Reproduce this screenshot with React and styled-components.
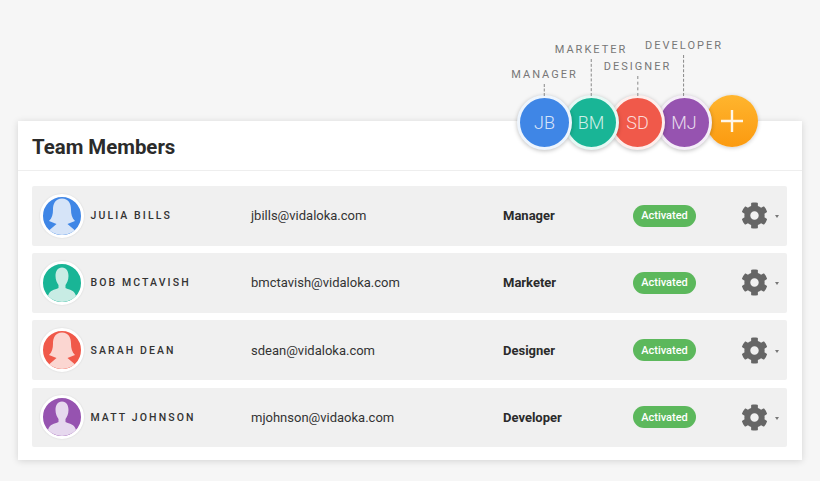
import styled, { createGlobalStyle } from "styled-components";
import { FaCog } from "react-icons/fa";

const Global = createGlobalStyle`
  html, body {
    margin: 0;
    background: #f6f6f6;
    font-family: Roboto, "Liberation Sans", sans-serif;
  }
`;

const Page = styled.div`
  width: 820px;
  height: 481px;
  padding: 121px 18px 0;
  box-sizing: border-box;
  overflow: hidden;
`;

const Card = styled.section`
  position: relative;
  width: 784px;
  height: 339px;
  background: #fff;
  box-shadow: 0 1px 7px rgba(0, 0, 0, 0.14);
`;

const Header = styled.header`
  height: 50px;
  box-sizing: border-box;
  padding: 2px 0 0 14px;
  display: flex;
  align-items: center;
  border-bottom: 1px solid #eeeeee;
`;

const Title = styled.h1`
  margin: 0;
  font-size: 20.4px;
  font-weight: 700;
  color: #2b2b2b;
`;

const Team = styled.div`
  position: absolute;
  left: 499px;
  top: -26.5px;
  display: flex;
`;

const Bubble = styled.div`
  position: relative;
  z-index: ${(p) => p.$z};
  width: 55px;
  height: 55px;
  margin-right: -8.5px;
  box-sizing: border-box;
  border: 3px solid ${(p) => p.$ring};
  border-radius: 50%;
  background: ${(p) => p.$color};
  color: rgba(255, 255, 255, 0.8);
  font-size: 18px;
  font-weight: 300;
  display: flex;
  align-items: center;
  justify-content: center;
  box-shadow: 0 1px 4px rgba(0, 0, 0, 0.25);
`;

const AddButton = styled.div`
  width: 52px;
  height: 52px;
  margin-left: 3px;
  border-radius: 50%;
  background: linear-gradient(#ffb52e, #fb9a10);
  display: flex;
  align-items: center;
  justify-content: center;
  box-shadow: 0 1px 4px rgba(0, 0, 0, 0.2);
`;

const Tag = styled.div`
  position: absolute;
  left: 50%;
  bottom: 100%;
  margin-bottom: 2px;
  transform: translateX(-50%);
  display: flex;
  flex-direction: column;
  align-items: center;
  gap: 3px;
`;

const TagText = styled.span`
  font-size: 11px;
  font-weight: 400;
  letter-spacing: 2px;
  line-height: 13px;
  color: #777;
`;

const TagLine = styled.i`
  display: block;
  height: ${(p) => p.$h}px;
  border-left: 1px dashed #888;
`;

const Rows = styled.div`
  padding: 15px 15px 0 14px;
  display: flex;
  flex-direction: column;
  gap: 7.7px;
`;

const Row = styled.div`
  height: 59.5px;
  padding-left: 8px;
  background: #f0f0f0;
  border-radius: 2px;
  display: grid;
  grid-template-columns: 211px 252px 130px 108px 1fr;
  align-items: center;
`;

const Person = styled.div`
  display: flex;
  align-items: center;
  gap: 6.5px;
`;

const Avatar = styled.div`
  width: 44px;
  height: 44px;
  box-sizing: border-box;
  border: 3px solid #fff;
  border-radius: 50%;
  overflow: hidden;
  background: ${(p) => p.$color};
  box-shadow: 0 0 2px rgba(0, 0, 0, 0.12);
  svg {
    display: block;
  }
`;

const Name = styled.span`
  font-size: 10.5px;
  font-weight: 500;
  letter-spacing: 2.1px;
  color: #333;
`;

const Email = styled.span`
  font-size: 13px;
  color: #333;
`;

const Role = styled.span`
  font-size: 13px;
  font-weight: 700;
  color: #2b2b2b;
`;

const Badge = styled.span`
  width: 63px;
  height: 22px;
  border-radius: 11px;
  background: #5cb85c;
  color: #fff;
  font-size: 11px;
  font-weight: 500;
  display: flex;
  align-items: center;
  justify-content: center;
`;

const Actions = styled.div`
  display: flex;
  align-items: center;
  gap: 7px;
  color: #666;
`;

const Caret = styled.i`
  width: 0;
  height: 0;
  margin-top: 2px;
  border-left: 2.5px solid transparent;
  border-right: 2.5px solid transparent;
  border-top: 3px solid #777;
`;

const PEOPLE = [
  { name: "JULIA BILLS", email: "jbills@vidaloka.com", role: "Manager", initials: "JB", color: "#3f86e6", tint: "#d6e4f8", ring: "#eef5fd", female: true, line: 12 },
  { name: "BOB MCTAVISH", email: "bmctavish@vidaloka.com", role: "Marketer", initials: "BM", color: "#19b596", tint: "#c8ece4", ring: "#e6f8f4", female: false, line: 37 },
  { name: "SARAH DEAN", email: "sdean@vidaloka.com", role: "Designer", initials: "SD", color: "#f0594a", tint: "#fbd6d1", ring: "#fdeeec", female: true, line: 20 },
  { name: "MATT JOHNSON", email: "mjohnson@vidaoka.com", role: "Developer", initials: "MJ", color: "#9653b0", tint: "#e6d8ee", ring: "#f5eef8", female: false, line: 41 },
];

const FEMALE = "M19 1.5C12.5 1.5 10 6.5 10 12.5C10 17.5 9 21 6 24L13.5 27L6.5 33V39H31.5V33L24.5 27L32 24C29 21 28 17.5 28 12.5C28 6.5 25.5 1.5 19 1.5Z";
const MALE = "M19 3.5C14.5 3.5 12.5 7.5 12.5 12C12.5 16 14 19 15.5 21V24C11.5 26 6.5 26 5 32V39H33V32C31.5 26 26.5 26 22.5 24V21C24 19 25.5 16 25.5 12C25.5 7.5 23.5 3.5 19 3.5Z";

const Silhouette = ({ female, tint }) => (
  <svg width="38" height="38" viewBox="0 0 38 38">
    <path d={female ? FEMALE : MALE} fill={tint} />
  </svg>
);

export default function App() {
  return (
    <Page>
      <Global />
      <Card>
        <Header>
          <Title>Team Members</Title>
        </Header>
        <Team>
          {PEOPLE.map((p, i) => (
            <Bubble key={p.initials} $color={p.color} $ring={p.ring} $z={8 - i}>
              {p.initials}
              <Tag>
                <TagText>{p.role.toUpperCase()}</TagText>
                <TagLine $h={p.line} />
              </Tag>
            </Bubble>
          ))}
          <AddButton>
            <svg width="26" height="26" viewBox="0 0 26 26">
              <path d="M13 2V24M2 13H24" stroke="#fff" strokeWidth="2.4" opacity="0.9" />
            </svg>
          </AddButton>
        </Team>
        <Rows>
          {PEOPLE.map((p) => (
            <Row key={p.email}>
              <Person>
                <Avatar $color={p.color}>
                  <Silhouette female={p.female} tint={p.tint} />
                </Avatar>
                <Name>{p.name}</Name>
              </Person>
              <Email>{p.email}</Email>
              <Role>{p.role}</Role>
              <Badge>Activated</Badge>
              <Actions>
                <FaCog size={27} />
                <Caret />
              </Actions>
            </Row>
          ))}
        </Rows>
      </Card>
    </Page>
  );
}
